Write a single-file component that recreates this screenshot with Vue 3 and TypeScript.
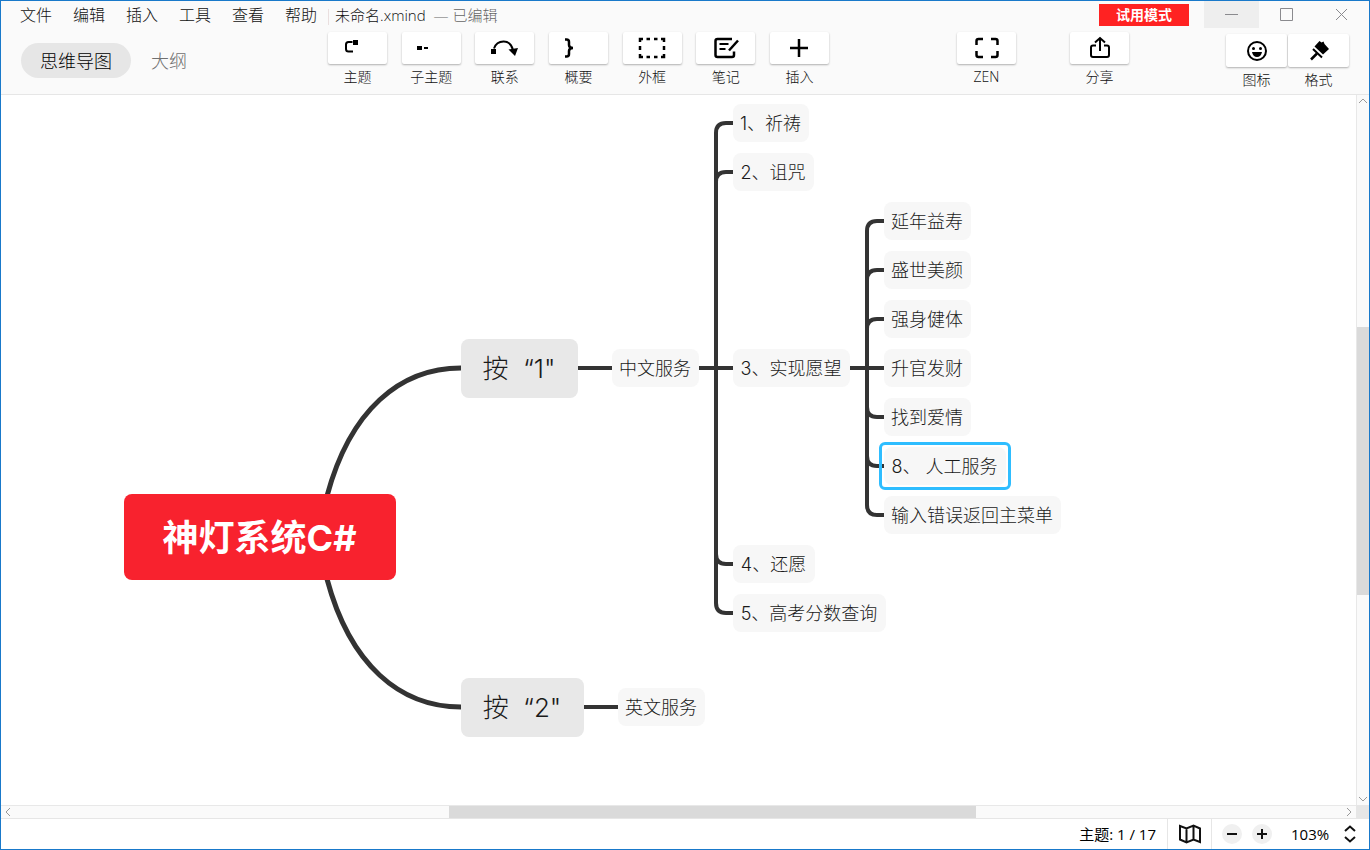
<script setup lang="ts">
import { ref } from 'vue'

interface Topic {
  text: string
  x: number
  y: number
  w: number
  level: 'root' | 'main' | 'sub'
}

const menus: string[] = ['文件', '编辑', '插入', '工具', '查看', '帮助']
const tools: { id: string; label: string }[] = [
  { id: 'topic', label: '主题' },
  { id: 'subtopic', label: '子主题' },
  { id: 'relation', label: '联系' },
  { id: 'summary', label: '概要' },
  { id: 'boundary', label: '外框' },
  { id: 'note', label: '笔记' },
  { id: 'insert', label: '插入' },
]

const view = ref<'map' | 'outline'>('map')
const zoom = ref('103%')
const selected = ref('8、 人工服务')

/* x is the left edge and y the vertical centre of a topic on the canvas */
const topics: Topic[] = [
  { text: '神灯系统C#', x: 123, y: 442, w: 272, level: 'root' },
  { text: '按  “1"', x: 460, y: 273, w: 117, level: 'main' },
  { text: '按  “2"', x: 460, y: 612, w: 123, level: 'main' },
  { text: '中文服务', x: 611, y: 273, w: 87, level: 'sub' },
  { text: '英文服务', x: 617, y: 612, w: 87, level: 'sub' },
  { text: '1、祈祷', x: 732, y: 28, w: 76, level: 'sub' },
  { text: '2、诅咒', x: 732, y: 77, w: 81, level: 'sub' },
  { text: '3、实现愿望', x: 732, y: 273, w: 117, level: 'sub' },
  { text: '4、还愿', x: 732, y: 469, w: 82, level: 'sub' },
  { text: '5、高考分数查询', x: 732, y: 518, w: 153, level: 'sub' },
  { text: '延年益寿', x: 883, y: 126, w: 87, level: 'sub' },
  { text: '盛世美颜', x: 883, y: 175, w: 87, level: 'sub' },
  { text: '强身健体', x: 883, y: 224, w: 87, level: 'sub' },
  { text: '升官发财', x: 883, y: 273, w: 87, level: 'sub' },
  { text: '找到爱情', x: 883, y: 322, w: 87, level: 'sub' },
  { text: '8、 人工服务', x: 883, y: 371, w: 122, level: 'sub' },
  { text: '输入错误返回主菜单', x: 883, y: 420, w: 177, level: 'sub' },
]

const heights = { root: 86, main: 59, sub: 38 }

function place(t: Topic) {
  return {
    left: `${t.x}px`,
    top: `${t.y - Math.floor(heights[t.level] / 2)}px`,
    width: `${t.w}px`,
  }
}

function branch(spine: number, from: number, to: number, end: number): string {
  const r = to < from ? 10 : -10
  return `M${spine} ${from}V${to + r}Q${spine} ${to} ${spine + 10} ${to}H${end}`
}

const branches: string[] = [
  'M577 273H611',
  'M583 612H617',
  'M698 273H732',
  'M849 273H883',
  'M715 273H733',
  'M866 273H884',
  ...[28, 77, 469, 518].map((y) => branch(715, 273, y, 733)),
  ...[126, 175, 224, 322, 371, 420].map((y) => branch(866, 273, y, 884)),
]
</script>

<template>
  <div class="window">
    <header class="head">
      <div class="titlebar">
        <nav class="menus">
          <button v-for="m in menus" :key="m" type="button">{{ m }}</button>
        </nav>
        <div class="doc"><span>未命名.xmind</span><span class="state">— 已编辑</span></div>
        <button class="trial" type="button">试用模式</button>
        <div class="controls">
          <button class="hover" type="button" aria-label="最小化">
            <svg width="14" height="14" viewBox="0 0 14 14"><path d="M0 7.500H13" /></svg>
          </button>
          <button type="button" aria-label="最大化">
            <svg width="14" height="14" viewBox="0 0 14 14"><path d="M0.500 1.500H12.500V13.500H0.500Z" /></svg>
          </button>
          <button type="button" aria-label="关闭">
            <svg width="14" height="14" viewBox="0 0 14 14"><path d="M1 2L12 13M12 2L1 13" /></svg>
          </button>
        </div>
      </div>

      <div class="toolbar">
        <div class="tabs">
          <button type="button" :class="{ active: view === 'map' }" @click="view = 'map'">思维导图</button>
          <button type="button" :class="{ active: view === 'outline' }" @click="view = 'outline'">大纲</button>
        </div>

        <div class="tools">
          <button v-for="t in tools" :key="t.id" class="tool" type="button">
            <span class="tile">
              <svg width="28" height="24" viewBox="0 0 28 24">
                <g v-if="t.id === 'topic'">
                  <path class="line" d="M8.500 6H4.500Q2 6 2 8.500V13Q2 15.500 4.500 15.500H9" />
                  <rect x="9" y="4" width="5" height="5" />
                </g>
                <g v-else-if="t.id === 'subtopic'">
                  <rect x="0" y="10" width="5" height="4" />
                  <rect x="7" y="11" width="4" height="2" />
                </g>
                <g v-else-if="t.id === 'relation'">
                  <path class="line" d="M3 12.500C6 4 19 2 22 14" />
                  <rect x="0" y="13" width="5" height="5" />
                  <path d="M17.500 13.500L27 12L24 20Z" />
                </g>
                <path v-else-if="t.id === 'summary'" class="line bold" d="M1 3.500H2.500Q5 3.500 5 6V9Q5 12 9 12Q5 12 5 15V18Q5 20.500 2.500 20.500H1" />
                <path
                  v-else-if="t.id === 'boundary'"
                  class="line bold"
                  d="M5 3H2V6M8.500 3H12M16 3H19.500M23 3H26V6M2 10V14M26 10V14M2 18V21H5M8.500 21H12M16 21H19.500M23 21H26V18"
                />
                <g v-else-if="t.id === 'note'">
                  <path class="line bold" d="M20 3H5.500Q3.500 3 3.500 5V19Q3.500 21 5.500 21H20Q22 21 22 19V15.500" />
                  <path class="line" d="M7.500 8H16.500M7.500 13H13.500" />
                  <path class="line bold" d="M17 14.500L26 4.500" />
                </g>
                <path v-else class="line bold" d="M14 3V21M5 12H23" />
              </svg>
            </span>
            <span class="caption">{{ t.label }}</span>
          </button>
        </div>

        <button class="tool zen" type="button">
          <span class="tile">
            <svg width="24" height="24" viewBox="0 0 24 24">
              <path class="line bold" d="M1.500 9V5Q1.500 3 3.500 3H8M16 3H20.500Q22.500 3 22.500 5V9M1.500 15V19Q1.500 21 3.500 21H8M16 21H20.500Q22.500 21 22.500 19V15" />
            </svg>
          </span>
          <span class="caption">ZEN</span>
        </button>

        <button class="tool share" type="button">
          <span class="tile">
            <svg width="24" height="24" viewBox="0 0 24 24">
              <path class="line" d="M8 9.500H5Q3 9.500 3 11.500V19Q3 21 5 21H19Q21 21 21 19V11.500Q21 9.500 19 9.500H16M12 15V2M7 6.500L12 2L17 6.500" />
            </svg>
          </span>
          <span class="caption">分享</span>
        </button>

        <div class="panel">
          <button class="tool" type="button">
            <span class="tile">
              <svg width="24" height="24" viewBox="0 0 24 24">
                <circle class="line" cx="12" cy="12" r="9" />
                <circle cx="8.500" cy="9.500" r="1.500" />
                <circle cx="15.500" cy="9.500" r="1.500" />
                <path d="M7 13H17Q16 18 12 18T7 13Z" />
              </svg>
            </span>
            <span class="caption">图标</span>
          </button>
          <button class="tool" type="button">
            <span class="tile">
              <svg width="24" height="24" viewBox="0 0 24 24">
                <path d="M12.500 2L14.500 3.500L16.500 2.500L17.500 5L22 10L16 15.500L7.500 7.500Z" />
                <path class="line" d="M6 10L15 18.500" />
                <path class="line bold" d="M10 14.500L4 20.500" />
              </svg>
            </span>
            <span class="caption">格式</span>
          </button>
        </div>
      </div>
    </header>

    <div class="workspace">
      <main class="canvas">
        <svg class="links" aria-hidden="true">
          <path class="root-link" d="M326 401C349 315 399 273 460 273" />
          <path class="root-link" d="M326 484C349 570 399 612 460 612" />
          <path v-for="d in branches" :key="d" :d="d" />
        </svg>
        <button
          v-for="t in topics"
          :key="t.text"
          type="button"
          class="topic"
          :class="[t.level, { selected: t.text === selected }]"
          :style="place(t)"
          @click="selected = t.text"
        >{{ t.text }}</button>
      </main>

      <div class="vbar">
        <button type="button" aria-label="向上滚动">
          <svg width="10" height="8" viewBox="0 0 10 8"><path d="M1 6L5 2L9 6" /></svg>
        </button>
        <div class="track"><div class="thumb"></div></div>
        <button type="button" aria-label="向下滚动">
          <svg width="10" height="8" viewBox="0 0 10 8"><path d="M1 2L5 6L9 2" /></svg>
        </button>
      </div>

      <div class="hbar">
        <button type="button" aria-label="向左滚动">
          <svg width="8" height="10" viewBox="0 0 8 10"><path d="M6 1L2 5L6 9" /></svg>
        </button>
        <div class="track"><div class="thumb"></div></div>
        <button type="button" aria-label="向右滚动">
          <svg width="8" height="10" viewBox="0 0 8 10"><path d="M2 1L6 5L2 9" /></svg>
        </button>
      </div>
      <div class="corner"></div>
    </div>

    <footer class="status">
      <span class="count">主题: 1 / 17</span>
      <button class="overview" type="button" aria-label="导航图">
        <svg width="22" height="20" viewBox="0 0 22 20">
          <path d="M1 2L7.500 4.500L14.500 1.500L21 4.500V18L14.500 15.500L7.500 18.500L1 15.500ZM7.500 4.500V18.500M14.500 1.500V15.500" />
        </svg>
      </button>
      <div class="zooming">
        <button class="round" type="button" aria-label="缩小">
          <svg width="12" height="12" viewBox="0 0 12 12"><path d="M1 6H11" /></svg>
        </button>
        <button class="round" type="button" aria-label="放大">
          <svg width="12" height="12" viewBox="0 0 12 12"><path d="M1 6H11M6 1V11" /></svg>
        </button>
        <label class="level">
          <select v-model="zoom" aria-label="缩放比例">
            <option>50%</option>
            <option>100%</option>
            <option>103%</option>
            <option>200%</option>
          </select>
          <svg width="12" height="18" viewBox="0 0 12 18"><path d="M1 6L6 1.500L11 6M1 12L6 16.500L11 12" /></svg>
        </label>
      </div>
    </footer>
  </div>
</template>

<style>
body {
  margin: 0;
}
</style>

<style scoped>
.window {
  box-sizing: border-box;
  display: flex;
  flex-direction: column;
  min-height: 100vh;
  border: 1px solid #1979ca;
  background: #fff;
  color: #111;
  font-family: 'Open Sans', 'Noto Sans CJK SC', sans-serif;
  font-weight: 300;
}

button,
select {
  margin: 0;
  padding: 0;
  border: 0;
  background: none;
  color: inherit;
  font: inherit;
}

svg {
  display: block;
}

.head {
  background: #fafafa;
  border-bottom: 1px solid #e6e6e6;
}

.titlebar {
  display: flex;
  height: 28px;
}

.menus {
  display: flex;
  gap: 21px;
  padding-left: 19px;
  font-size: 16px;
  line-height: 28px;
}

.doc {
  display: flex;
  gap: 8px;
  margin: 8px 0 4px 11px;
  padding-left: 6px;
  border-left: 1px solid #eadfdf;
  font-size: 15px;
  line-height: 12px;
  white-space: nowrap;
}

.state {
  color: #666;
}

.trial {
  width: 90px;
  height: 22px;
  margin: 3px 15px 0 auto;
  background: #ff2222;
  color: #fff;
  font-size: 14px;
  font-weight: 700;
  line-height: 22px;
}

.controls {
  display: flex;
}

.controls button {
  display: flex;
  justify-content: center;
  width: 55px;
  height: 27px;
  padding-top: 6px;
}

.controls .hover {
  background: #eee;
}

.controls path {
  fill: none;
  stroke: #8a8a8e;
}

.toolbar {
  display: flex;
  align-items: flex-start;
  height: 65px;
}

.tabs {
  box-sizing: border-box;
  display: flex;
  gap: 1px;
  width: 327px;
  padding: 14px 0 0 20px;
  font-size: 18px;
  line-height: 36px;
}

.tabs button {
  height: 35px;
  padding: 0 19px;
  border-radius: 18px;
  color: #707070;
}

.tabs .active {
  background: #e6e6e6;
  color: #000;
}

.tools {
  display: flex;
  justify-content: space-between;
  width: 501px;
}

.tool {
  display: flex;
  flex-direction: column;
  width: 59px;
  padding-top: 3px;
}

.tile {
  display: flex;
  align-items: center;
  justify-content: center;
  height: 32px;
  background: #fff;
  border-radius: 2px;
  box-shadow: 0 1px 2px rgba(0, 0, 0, 0.3);
}

.tile svg {
  fill: #000;
}

.line {
  fill: none;
  stroke: #000;
  stroke-width: 2;
}

.bold {
  stroke-width: 2.5;
}

.caption {
  color: #111;
  font-size: 14px;
  line-height: 25px;
  text-align: center;
}

.zen {
  margin-left: 128px;
}

.share {
  margin-left: 54px;
}

.panel {
  display: flex;
  gap: 1px;
  margin: 2px 20px 0 auto;
}

.panel .tool {
  width: 61px;
}

.panel .tile {
  height: 33px;
}

.workspace {
  flex: 1;
  display: grid;
  grid-template-columns: 1fr 13px;
  grid-template-rows: 1fr 13px;
}

.canvas {
  position: relative;
  overflow: hidden;
  min-height: 640px;
}

.links {
  position: absolute;
  inset: 0;
  width: 100%;
  height: 100%;
  fill: none;
  stroke: #333;
  stroke-width: 4;
}

.root-link {
  stroke-width: 5;
}

.topic {
  position: absolute;
  height: 38px;
  padding-right: 1px;
  border-radius: 8px;
  background: #f7f7f7;
  color: #1a1a1a;
  font-family: Inter, 'Noto Sans CJK SC', sans-serif;
  font-size: 18px;
  line-height: 40px;
  text-align: center;
  white-space: pre;
}

.topic.main {
  height: 59px;
  background: #e8e8e8;
  font-size: 26px;
  line-height: 60px;
}

.topic.root {
  height: 86px;
  background: #f8222e;
  color: #fff;
  font-size: 36px;
  font-weight: 700;
  line-height: 88px;
}

.topic.selected::after {
  content: '';
  position: absolute;
  inset: -5px;
  border: 3px solid #2ebdff;
  border-radius: 6px;
}

.vbar,
.hbar {
  display: flex;
  background: #fafafa;
}

.vbar {
  flex-direction: column;
  border-left: 1px solid #e8e8e8;
}

.hbar {
  border-top: 1px solid #e8e8e8;
}

.vbar button,
.hbar button {
  display: flex;
  align-items: center;
  justify-content: center;
  width: 14px;
  height: 12px;
}

.vbar button {
  width: 12px;
}

.vbar path,
.hbar path {
  fill: none;
  stroke: #999;
}

.track {
  flex: 1;
  display: flex;
}

.vbar .track {
  flex-direction: column;
  padding: 220px 0 198px;
}

.hbar .track {
  padding: 0 366px 0 434px;
}

.thumb {
  flex: 1;
  background: #dadada;
}

.corner {
  background: #e6e6e6;
}

.status {
  display: flex;
  justify-content: flex-end;
  height: 30px;
  border-top: 1px solid #e6e6e6;
  color: #000;
  font-size: 15px;
  font-weight: 400;
  line-height: 31px;
}

.count {
  margin-right: 11px;
}

.overview {
  display: flex;
  align-items: center;
  justify-content: center;
  width: 45px;
  border: solid #e6e6e6;
  border-width: 0 1px;
}

.status path {
  fill: none;
  stroke: #111;
  stroke-width: 2;
}

.zooming {
  display: flex;
  align-items: center;
  gap: 10px;
  padding: 0 13px 0 10px;
}

.round {
  display: flex;
  align-items: center;
  justify-content: center;
  width: 20px;
  height: 20px;
  border-radius: 50%;
  background: #f0f0f0;
}

.level {
  display: flex;
  align-items: center;
  gap: 13px;
  padding-left: 9px;
}

.level select {
  appearance: none;
  width: 40px;
  line-height: 20px;
}
</style>
